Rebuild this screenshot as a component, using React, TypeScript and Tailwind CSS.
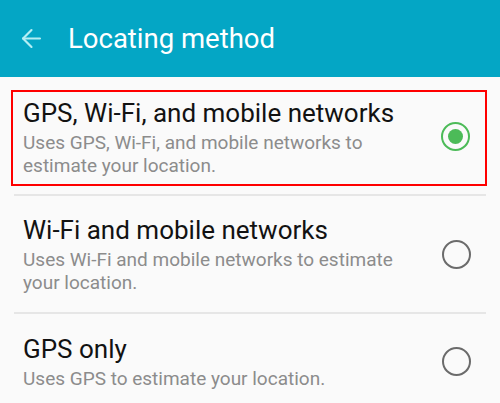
import { ArrowLeft } from 'lucide-react'

type Option = {
  title: string
  description: string
  checked: boolean
}

const options: Option[] = [
  {
    title: 'GPS, Wi-Fi, and mobile networks',
    description: 'Uses GPS, Wi-Fi, and mobile networks to estimate your location.',
    checked: true,
  },
  {
    title: 'Wi-Fi and mobile networks',
    description: 'Uses Wi-Fi and mobile networks to estimate your location.',
    checked: false,
  },
  {
    title: 'GPS only',
    description: 'Uses GPS to estimate your location.',
    checked: false,
  },
]

function Radio({ checked }: { checked: boolean }) {
  if (checked) {
    return (
      <span className="flex h-[29px] w-[29px] shrink-0 items-center justify-center rounded-full border-2 border-[#4cbb58]">
        <span className="h-[15px] w-[15px] rounded-full bg-[#4cbb58]" />
      </span>
    )
  }
  return <span className="block h-[29px] w-[29px] shrink-0 rounded-full border-2 border-[#6b6b6b]" />
}

function OptionText({ option }: { option: Option }) {
  return (
    <div className="w-[392px]">
      <p className="text-[26px] leading-[30px] text-[#121212]">{option.title}</p>
      <p className="mt-[3px] text-[19px] leading-[23px] text-[#8c8c8c]">{option.description}</p>
    </div>
  )
}

export default function App() {
  return (
    <div className="h-[403px] w-[500px] overflow-hidden bg-[#fafafa] font-['Roboto',sans-serif]">
      <header className="flex h-[77px] items-center bg-[#04a6c5] pl-[17px]">
        <ArrowLeft size={29} strokeWidth={1.8} className="text-[#b5eef4]" />
        <h1 className="ml-[22px] text-[27.5px] text-white">Locating method</h1>
      </header>

      <div className="pt-[13px]">
        <div className="ml-[11px] mr-[13px] flex h-[96px] items-start justify-between border-2 border-[#ff0000] pl-[10px] pr-[15px] pt-[6px]">
          <OptionText option={options[0]} />
          <div className="mt-[24px] shrink-0">
            <Radio checked={options[0].checked} />
          </div>
        </div>

        <div className="mx-[14px] mt-[8px] h-[2px] bg-[#e6e6e6]" />

        <div className="flex h-[116px] items-center justify-between pl-[23px] pr-[29px]">
          <OptionText option={options[1]} />
          <Radio checked={options[1].checked} />
        </div>

        <div className="mx-[14px] h-[2px] bg-[#e6e6e6]" />

        <div className="flex items-start justify-between pl-[23px] pr-[29px] pt-[20px]">
          <OptionText option={options[2]} />
          <div className="mt-[13px] shrink-0">
            <Radio checked={options[2].checked} />
          </div>
        </div>
      </div>
    </div>
  )
}
